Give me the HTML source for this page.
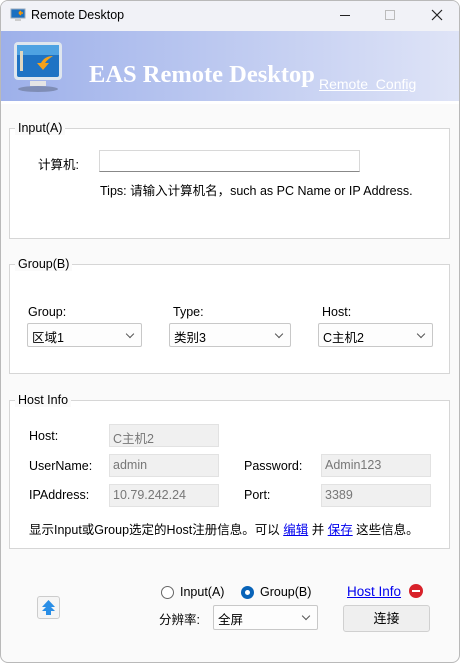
<!DOCTYPE html>
<html><head><meta charset="utf-8"><style>
*{margin:0;padding:0;box-sizing:border-box}
body{width:460px;height:663px;overflow:hidden;background:#fff;font-family:"Liberation Sans","Noto Sans CJK SC",sans-serif;font-size:12.5px;color:#000}
.win{position:absolute;left:0;top:0;width:460px;height:663px;border:1px solid #b9b9b9;border-radius:8px;background:#fafafa;overflow:hidden}
.a{position:absolute;white-space:nowrap}
.title{left:-1px;top:-1px;width:460px;height:31px;background:#f1f2f7}
.banner{left:-1px;top:30px;width:460px;height:70px;background:linear-gradient(90deg,#9db0ea,#dfe4f7)}
.gb{position:absolute;left:8px;width:441px;border:1px solid #d6d6d6;background:#fff}
.lg{position:absolute;left:5px;top:-8px;background:#fafafa;padding:0 3px}
.cb{position:absolute;height:24px;border:1px solid #c8c8c8;border-radius:2px;background:#fdfdfd;padding:3px 4px}
.cb:after{content:"";position:absolute;right:8px;top:7px;width:5px;height:5px;border-right:1px solid #555;border-bottom:1px solid #555;transform:rotate(45deg)}
.ro{position:absolute;width:110px;height:23px;background:#f0f0f0;border:1px solid #e2e2e2;color:#777;padding:3px 3px}
a{color:#00e;text-decoration:underline}
</style></head><body><div class="win">
<div class="a title"></div>
<svg class="a" style="left:9px;top:7px" width="16" height="14"><rect x="1" y="1" width="14" height="9" fill="#1a6fc0" stroke="#9ab" stroke-width="1"/><path d="M9 5h4M9 5l2-2M9 5l2 2" stroke="#f90" stroke-width="1.5" fill="none"/><rect x="5" y="11" width="6" height="2" fill="#ccc"/></svg>
<div class="a" style="left:30px;top:7px;font-size:12.5px">Remote Desktop</div>
<div class="a" style="left:339px;top:14px;width:10px;height:1px;background:#222"></div>
<div class="a" style="left:384px;top:9px;width:10px;height:10px;border:1px solid #bbb"></div>
<svg class="a" style="left:430px;top:8px" width="12" height="12"><path d="M1 1L11 11M11 1L1 11" stroke="#222" stroke-width="1.2"/></svg>
<div class="a banner"></div>
<svg class="a" style="left:12px;top:40px" width="50" height="52">
<rect x="1" y="1" width="48" height="38" rx="4" fill="#dfe6ee"/>
<rect x="4" y="4" width="42" height="32" rx="2" fill="#1f73c4"/>
<rect x="4" y="4" width="42" height="10" fill="#4ea2e2"/>
<path d="M40 15c-6 0-10 3-12 7h-4l6 7 6-7h-4c2-3 5-5 8-7z" fill="#f6a11a"/>
<rect x="7" y="10" width="3" height="20" fill="#e0d7c0"/>
<rect x="17" y="40" width="16" height="5" fill="#e5e5e5"/>
<ellipse cx="25" cy="48" rx="20" ry="3" fill="#7f8db5"/>
</svg>
<div class="a" style="left:88px;top:60px;font-family:'Liberation Serif',serif;font-weight:bold;font-size:24.5px;color:#fff">EAS Remote Desktop</div>
<div class="a" style="left:318px;top:75px;font-size:14px;color:#fff;text-decoration:underline">Remote&nbsp; Config</div>
<div class="a" style="left:-1px;top:100px;width:460px;height:3px;background:#fff"></div>

<div class="gb" style="top:127px;height:111px"><div class="lg">Input(A)</div></div>
<div class="a" style="left:37px;top:153px">计算机:</div>
<div class="a" style="left:98px;top:149px;width:261px;height:22px;border:1px solid #d8d8d8;border-bottom:1px solid #888;background:#fff"></div>
<div class="a" style="left:99px;top:179px">Tips: 请输入计算机名，such as PC Name or IP Address.</div>

<div class="gb" style="top:263px;height:110px"><div class="lg">Group(B)</div></div>
<div class="a" style="left:27px;top:304px">Group:</div>
<div class="a" style="left:172px;top:304px">Type:</div>
<div class="a" style="left:321px;top:304px">Host:</div>
<div class="cb" style="left:26px;top:322px;width:115px">区域1</div>
<div class="cb" style="left:168px;top:322px;width:122px">类别3</div>
<div class="cb" style="left:317px;top:322px;width:115px">C主机2</div>

<div class="gb" style="top:399px;height:149px"><div class="lg">Host Info</div></div>
<div class="a" style="left:28px;top:428px">Host:</div>
<div class="a" style="left:28px;top:458px">UserName:</div>
<div class="a" style="left:28px;top:487px">IPAddress:</div>
<div class="a" style="left:243px;top:458px">Password:</div>
<div class="a" style="left:243px;top:487px">Port:</div>
<div class="ro" style="left:108px;top:423px">C主机2</div>
<div class="ro" style="left:108px;top:453px">admin</div>
<div class="ro" style="left:108px;top:483px">10.79.242.24</div>
<div class="ro" style="left:320px;top:453px">Admin123</div>
<div class="ro" style="left:320px;top:483px">3389</div>
<div class="a" style="left:28px;top:518px">显示Input或Group选定的Host注册信息。可以 <a>编辑</a> 并 <a>保存</a> 这些信息。</div>

<div class="a" style="left:36px;top:595px;width:23px;height:23px;border:1px solid #ccc;border-radius:3px;background:#f5f5f5"></div>
<svg class="a" style="left:38px;top:597px" width="19" height="19"><path d="M9.5 2L3 9h4l-4 4h4v4h5v-4h4l-4-4h4z" fill="#2a8ee6"/></svg>
<div class="a" style="left:160px;top:585px;width:13px;height:13px;border:1px solid #666;border-radius:50%;background:#fff"></div>
<div class="a" style="left:179px;top:584px">Input(A)</div>
<div class="a" style="left:240px;top:585px;width:13px;height:13px;border-radius:50%;background:#0863b8"></div>
<div class="a" style="left:244px;top:589px;width:5px;height:5px;border-radius:50%;background:#fff"></div>
<div class="a" style="left:259px;top:584px">Group(B)</div>
<div class="a" style="left:346px;top:583px;font-size:13.5px"><a>Host Info</a></div>
<div class="a" style="left:408px;top:583px;width:14px;height:14px;border-radius:50%;background:#d8222a"></div>
<div class="a" style="left:411px;top:589px;width:8px;height:2px;background:#fff"></div>
<div class="a" style="left:158px;top:608px">分辨率:</div>
<div class="cb" style="left:212px;top:604px;width:105px;height:25px">全屏</div>
<div class="a" style="left:342px;top:604px;width:87px;height:27px;border:1px solid #d0d0d0;border-radius:3px;background:#efefef;text-align:center;line-height:25px;font-size:13px">连接</div>
</div></body></html>
